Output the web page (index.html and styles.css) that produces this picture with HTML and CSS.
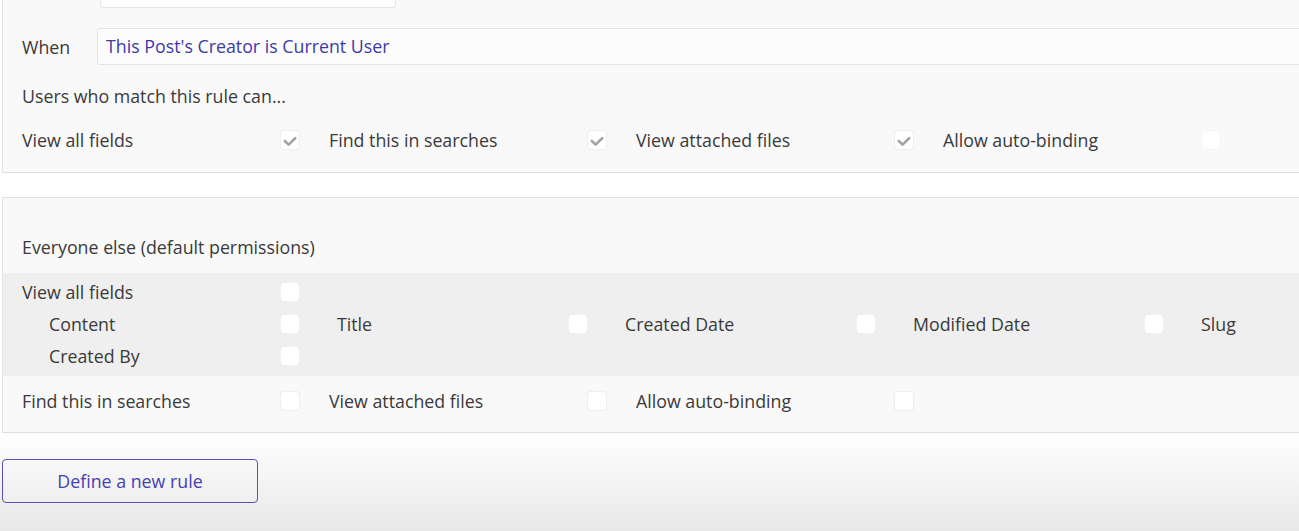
FILE: index.html
```html
<!DOCTYPE html>
<html>
<head>
<meta charset="utf-8">
<link rel="stylesheet" href="styles.css">
</head>
<body>
<div class="panel panel-rule">
  <div class="stub-row"><div class="stub-input"></div></div>
  <div class="when-row">
    <span class="when-label">When</span>
    <div class="when-input">This Post's Creator is Current User</div>
  </div>
  <div class="text-row users">Users who match this rule can...</div>
  <div class="perm-row">
    <div class="cell"><span class="lbl">View all fields</span><span class="cb checked"><svg viewBox="0 0 20 20"><polyline points="4.8,11 8.6,14.6 15.2,8.2"/></svg></span></div>
    <div class="cell"><span class="lbl">Find this in searches</span><span class="cb checked"><svg viewBox="0 0 20 20"><polyline points="4.8,11 8.6,14.6 15.2,8.2"/></svg></span></div>
    <div class="cell"><span class="lbl">View attached files</span><span class="cb checked"><svg viewBox="0 0 20 20"><polyline points="4.8,11 8.6,14.6 15.2,8.2"/></svg></span></div>
    <div class="cell"><span class="lbl">Allow auto-binding</span><span class="cb faint"></span></div>
  </div>
</div>

<div class="panel panel-default">
  <div class="text-row everyone">Everyone else (default permissions)</div>
  <div class="band">
    <div class="band-row">
      <div class="cell"><span class="lbl">View all fields</span><span class="cb"></span></div>
    </div>
    <div class="band-row sub">
      <div class="subcell"><span class="lbl">Content</span><span class="cb"></span></div>
      <div class="subcell"><span class="lbl">Title</span><span class="cb"></span></div>
      <div class="subcell"><span class="lbl">Created Date</span><span class="cb"></span></div>
      <div class="subcell"><span class="lbl">Modified Date</span><span class="cb"></span></div>
      <div class="subcell"><span class="lbl">Slug</span><span class="cb"></span></div>
    </div>
    <div class="band-row sub">
      <div class="subcell"><span class="lbl">Created By</span><span class="cb"></span></div>
    </div>
  </div>
  <div class="perm-row find-row">
    <div class="cell"><span class="lbl">Find this in searches</span><span class="cb"></span></div>
    <div class="cell"><span class="lbl">View attached files</span><span class="cb"></span></div>
    <div class="cell"><span class="lbl">Allow auto-binding</span><span class="cb"></span></div>
  </div>
</div>

<div class="footer">
  <button class="new-rule">Define a new rule</button>
</div>
</body>
</html>
```

FILE: styles.css
```css
* { box-sizing: border-box; }
html, body { margin: 0; padding: 0; }
body {
  width: 1299px;
  height: 531px;
  overflow: hidden;
  background: #ffffff;
  font-family: "Open Sans", "Liberation Sans", sans-serif;
  font-size: 17.8px;
  color: #3a3a3a;
}
.panel {
  margin-left: 2px;
  background: #f9f9f9;
  border-left: 1px solid #e3e3e3;
  border-bottom: 1px solid #dedede;
  overflow: hidden;
  white-space: nowrap;
}
.panel-rule { height: 173px; }
.stub-row { height: 8px; padding-left: 97px; }
.stub-input {
  width: 296px;
  height: 8px;
  background: #ffffff;
  border: 1px solid #e6e6e6;
  border-top: none;
  border-radius: 0 0 3px 3px;
}
.when-row {
  margin-top: 20px;
  height: 37px;
  display: flex;
  align-items: center;
}
.when-label { width: 94px; padding-left: 19px; flex: none; }
.when-input {
  flex: 1;
  height: 37px;
  margin-right: -20px;
  background: #fcfcfc;
  border: 1px solid #e4e4e4;
  border-radius: 3px;
  padding-left: 8px;
  line-height: 35px;
  color: #3d3aa6;
}
.text-row { padding-left: 19px; line-height: 24px; }
.users { margin-top: 19px; }
.perm-row {
  margin-top: 12px;
  height: 40px;
  display: flex;
  align-items: center;
  padding-left: 19px;
}
.cell {
  flex: none;
  width: 307px;
  display: flex;
  align-items: center;
}
.cell .lbl { width: 258px; flex: none; }
.subcell {
  flex: none;
  width: 288px;
  display: flex;
  align-items: center;
}
.subcell .lbl { width: 231px; flex: none; }
.cb {
  flex: none;
  width: 20px;
  height: 20px;
  background: #ffffff;
  border-radius: 4px;
  border: 1px solid #efefef;
  box-shadow: 0 0 1px rgba(0,0,0,0.06);
  display: flex;
  align-items: center;
  justify-content: center;
}
.cb svg { width: 20px; height: 20px; flex: none; }
.cb polyline {
  fill: none;
  stroke: #a3a3a3;
  stroke-width: 2.6;
  stroke-linecap: round;
  stroke-linejoin: round;
}
.cb.faint { border-color: #f6f6f6; background: #fefefe; box-shadow: none; }

.panel-default {
  margin-top: 24px;
  border-top: 1px solid #e3e3e3;
  height: 236px;
}
.everyone { margin-top: 37px; }
.band {
  margin-top: 14px;
  background: #efefef;
  padding: 3px 0 4px 19px;
  height: 103px;
}
.band-row {
  height: 32px;
  display: flex;
  align-items: center;
}
.band-row.sub { padding-left: 27px; }
.band .cb { border-color: #f2f2f2; }
.find-row { margin-top: 5px; }

.footer {
  height: 98px;
  padding-top: 26px;
  background: linear-gradient(#ffffff 0%, #f6f6f6 40%, #e8e8e8 100%);
}
.new-rule {
  margin-left: 2px;
  width: 256px;
  height: 44px;
  background: transparent;
  border: 1px solid #5750bd;
  border-radius: 4px;
  font-family: "Open Sans", "Liberation Sans", sans-serif;
  font-size: 17.8px;
  color: #4540b0;
  padding: 0;
}
```
